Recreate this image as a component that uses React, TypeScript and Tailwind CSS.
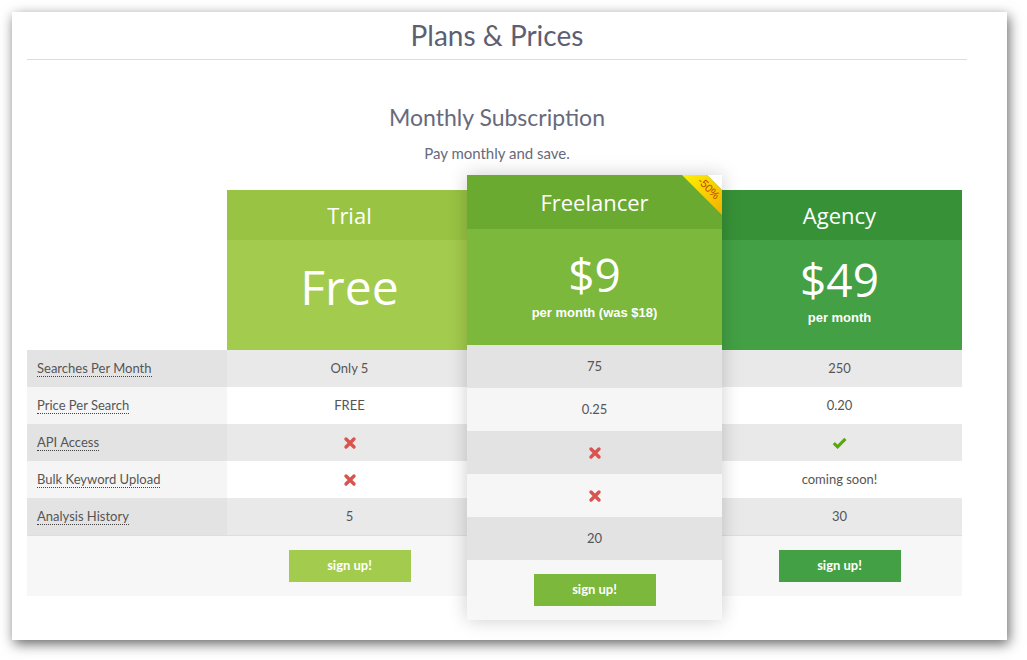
import type { ReactNode } from "react";

type Cell = ReactNode;

const labels = [
  "Searches Per Month",
  "Price Per Search",
  "API Access",
  "Bulk Keyword Upload",
  "Analysis History",
];

function Cross() {
  return (
    <svg width="14" height="14" viewBox="0 0 14 14" aria-hidden>
      <path
        d="M3 3 L11 11 M11 3 L3 11"
        stroke="#d9534f"
        strokeWidth="3.4"
        strokeLinecap="round"
        fill="none"
      />
    </svg>
  );
}

function Check() {
  return (
    <svg width="15" height="12" viewBox="0 0 15 12" aria-hidden>
      <path
        d="M1.8 6.2 L5.6 9.8 L13.4 1.8"
        stroke="#5aa70e"
        strokeWidth="3.2"
        strokeLinejoin="miter"
        fill="none"
      />
    </svg>
  );
}

function PlanColumn({
  name,
  headBg,
  priceBg,
  btnBg,
  price,
  cells,
}: {
  name: string;
  headBg: string;
  priceBg: string;
  btnBg: string;
  price: ReactNode;
  cells: Cell[];
}) {
  return (
    <div className="mt-[15px] flex w-[245px] flex-col">
      <div
        className={`flex h-[50px] items-center justify-center text-[22px] text-white ${headBg}`}
      >
        {name}
      </div>
      <div className={`flex h-[110px] flex-col items-center text-white ${priceBg}`}>
        {price}
      </div>
      {cells.map((c, i) => (
        <div
          key={i}
          className={`flex h-[37px] items-center justify-center font-['Lato'] text-[13px] text-[#555] ${
            i % 2 === 0 ? "bg-[#e9e9e9]" : "bg-white"
          }`}
        >
          {c}
        </div>
      ))}
      <div className="flex h-[61px] items-center justify-center border-t border-[#dedede] bg-[#f7f7f7]">
        <button
          className={`h-[32px] w-[122px] font-['Lato'] text-[13px] font-bold text-white ${btnBg}`}
        >
          sign up!
        </button>
      </div>
    </div>
  );
}

export default function App() {
  const freelancerCells: Cell[] = ["75", "0.25", <Cross />, <Cross />, "20"];

  return (
    <div className="min-h-screen bg-white pl-[12px] pt-[12px] font-['Open_Sans',sans-serif]">
      <div className="h-[628px] w-[995px] bg-white pl-[15px] shadow-[2px_4px_12px_rgba(0,0,0,0.6)]">
        <div className="w-[940px]">
          <h1 className="pt-[7px] text-center font-['Lato'] text-[28px] leading-[32px] text-[#5d5f72]">
            Plans &amp; Prices
          </h1>
          <div className="mt-[8px] border-t border-[#dcdcdc]" />

          <h2 className="mt-[42px] text-center font-['Lato'] text-[23px] leading-[30px] text-[#666a7d]">
            Monthly Subscription
          </h2>
          <p className="mt-[10px] text-center font-['Lato'] text-[15px] leading-[22px] text-[#666a7d]">
            Pay monthly and save.
          </p>

          <div className="mt-[11px] flex items-start">
            {/* feature labels */}
            <div className="mt-[175px] flex w-[200px] flex-col">
              {labels.map((l, i) => (
                <div
                  key={l}
                  className={`flex h-[37px] items-center pl-[10px] font-['Lato'] text-[13px] text-[#555] ${
                    i % 2 === 0 ? "bg-[#e3e3e3]" : "bg-[#f5f5f5]"
                  }`}
                >
                  <span className="border-b border-dotted border-[#444] leading-[15px]">
                    {l}
                  </span>
                </div>
              ))}
              <div className="h-[61px] border-t border-[#dedede] bg-[#f7f7f7]" />
            </div>

            <PlanColumn
              name="Trial"
              headBg="bg-[#98c343]"
              priceBg="bg-[#a3cb4d]"
              btnBg="bg-[#a3cb4d]"
              price={<div className="pt-[23px] text-[48px] leading-[48px]">Free</div>}
              cells={["Only 5", "FREE", <Cross />, <Cross />, "5"]}
            />

            {/* featured plan */}
            <div className="relative z-10 mx-[-5px] flex w-[255px] flex-col shadow-[0_0_18px_rgba(0,0,0,0.2)]">
              <div className="flex h-[54px] items-center justify-center bg-[#6aaa31] text-[22px] text-white">
                Freelancer
              </div>
              <div className="flex h-[116px] flex-col items-center bg-[#7bb83b] text-white">
                <div className="pt-[22px] text-[46px] leading-[46px]">$9</div>
                <div className="mt-[8px] font-['Liberation_Sans'] text-[13px] font-bold leading-[16px]">
                  per month (was $18)
                </div>
              </div>
              {freelancerCells.map((c, i) => (
                <div
                  key={i}
                  className={`flex h-[43px] items-center justify-center font-['Lato'] text-[13px] text-[#555] ${
                    i % 2 === 0 ? "bg-[#e3e3e3]" : "bg-[#f6f6f6]"
                  }`}
                >
                  {c}
                </div>
              ))}
              <div className="flex h-[60px] items-center justify-center bg-[#f7f7f7]">
                <button className="h-[32px] w-[122px] bg-[#7bb83b] font-['Lato'] text-[13px] font-bold text-white">
                  sign up!
                </button>
              </div>

              {/* -50% corner ribbon */}
              <div className="absolute right-0 top-0 h-[40px] w-[40px] overflow-hidden">
                <svg width="40" height="40" viewBox="0 0 40 40" className="absolute inset-0" aria-hidden>
                  <defs>
                    <linearGradient id="rib" x1="0" y1="0" x2="1" y2="1">
                      <stop offset="0" stopColor="#fff200" />
                      <stop offset="1" stopColor="#f0b000" />
                    </linearGradient>
                  </defs>
                  <polygon points="25,0 40,0 40,15" fill="#ffffff" />
                  <polygon points="0,0 25,0 40,15 40,40" fill="url(#rib)" />
                </svg>
                <span className="absolute left-[12px] top-[7px] w-[30px] rotate-45 text-center font-['Liberation_Sans'] text-[11px] leading-[12px] text-[#c4420f]">
                  -50%
                </span>
              </div>
            </div>

            <PlanColumn
              name="Agency"
              headBg="bg-[#379237]"
              priceBg="bg-[#43a044]"
              btnBg="bg-[#43a044]"
              price={
                <>
                  <div className="pt-[16px] text-[46px] leading-[46px]">$49</div>
                  <div className="mt-[8px] font-['Liberation_Sans'] text-[13px] font-bold leading-[16px]">
                    per month
                  </div>
                </>
              }
              cells={["250", "0.20", <Check />, "coming soon!", "30"]}
            />
          </div>
        </div>
      </div>
    </div>
  );
}
